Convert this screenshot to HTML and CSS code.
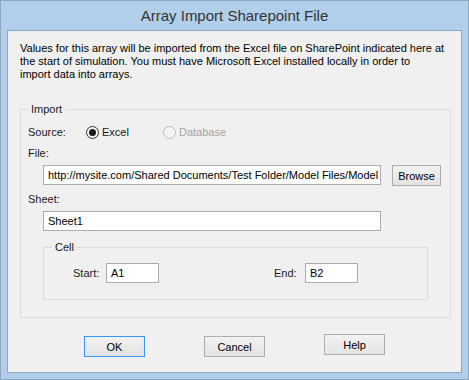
FILE: index.html
```html
<!DOCTYPE html>
<html>
<head>
<meta charset="utf-8">
<title>Array Import Sharepoint File</title>
<link rel="stylesheet" href="styles.css">
</head>
<body>
	<div class="window">
		<div class="titlebar">Array Import Sharepoint File</div>
		<div class="panel">
			<p class="intro">Values for this array will be imported from the Excel file on SharePoint indicated here at<br>the start of simulation. You must have Microsoft Excel installed locally in order to<br>import data into arrays.</p>

			<fieldset class="group import">
				<legend>Import</legend>
				<div class="row source">
					<span class="source-label">Source:</span>
					<span class="radio checked"><span class="dot"></span>Excel</span>
					<span class="radio disabled"><span class="dot"></span>Database</span>
				</div>
				<div class="label file-label">File:</div>
				<div class="row file-row">
					<div class="field wide">http://mysite.com/Shared Documents/Test Folder/Model Files/Model</div>
					<div class="btn browse">Browse</div>
				</div>
				<div class="label sheet-label">Sheet:</div>
				<div class="row sheet-row">
					<div class="field wide">Sheet1</div>
				</div>

				<fieldset class="group cell">
					<legend>Cell</legend>
					<div class="row cell-row">
						<span class="cell-label start-label">Start:</span>
						<div class="field small">A1</div>
						<span class="cell-label end-label">End:</span>
						<div class="field small">B2</div>
					</div>
				</fieldset>
			</fieldset>

			<div class="buttons">
				<div class="btn dialog-btn default">OK</div>
				<div class="btn dialog-btn">Cancel</div>
				<div class="btn dialog-btn help">Help</div>
			</div>
		</div>
	</div>
</body>
</html>
```

FILE: styles.css
```css
html, body {
	margin: 0;
	padding: 0;
	background: #b1cfea;
}

body {
	font-family: "Liberation Sans", Arial, sans-serif;
	font-size: 11px;
	color: #1a1a1a;
	user-select: none;
}

.window {
	width: 469px;
	height: 380px;
	box-sizing: border-box;
	border: 1px solid #8fa8c2;
	background: #b1cfea;
	padding: 0 6px 6px 6px;
	display: flex;
	flex-direction: column;
}

.titlebar {
	height: 29px;
	line-height: 29px;
	text-align: center;
	font-size: 15px;
	color: #333;
}

.panel {
	flex: 1;
	border: 1px solid #8ca7c2;
	background: #f0f0f0;
	padding: 11px 10px 0 12px;
}

.intro {
	margin: 0;
	line-height: 13px;
	color: #000;
}

/* group boxes */
.group {
	margin: 0;
	border: 1px solid #dcdcdc;
	min-width: 0;
	box-sizing: border-box;
}
.group legend {
	padding: 0 3px;
	line-height: 13px;
}

.import {
	margin-top: 22px;
	width: 431px;
	padding: 0 0 17px 7px;
}

.cell {
	margin: 10px 0 0 15px;
	width: 385px;
	padding: 0 0 16px 8px;
}

.row {
	display: flex;
	align-items: center;
}

.label {
	line-height: 16px;
}

.source {
	margin-top: 8px;
	height: 16px;
}
.source-label {
	width: 58px;
}

.radio {
	display: flex;
	align-items: center;
}
.radio.checked {
	width: 77px;
}
.dot {
	width: 13px;
	height: 13px;
	box-sizing: border-box;
	border-radius: 50%;
	border: 1px solid #333;
	background: radial-gradient(circle, #fff 40%, #e8e8e8 100%);
	margin-right: 3px;
	display: flex;
	align-items: center;
	justify-content: center;
}
.checked .dot::after {
	content: "";
	width: 7px;
	height: 7px;
	border-radius: 50%;
	background: #1a1a1a;
}
.disabled {
	color: #a3a3a3;
}
.disabled .dot {
	border-color: #bcbcbc;
	background: #f4f4f4;
}

.file-label {
	margin-top: 5px;
}
.file-row {
	margin-top: 4px;
	align-items: flex-start;
}
.sheet-label {
	margin-top: 5px;
}
.sheet-row {
	margin-top: 4px;
}

.field {
	height: 20px;
	box-sizing: border-box;
	border: 1px solid #abadb3;
	background: #fff;
	padding: 0 4px;
	line-height: 18px;
	white-space: nowrap;
	overflow: hidden;
	color: #000;
}
.field.wide {
	margin-left: 15px;
	width: 338px;
}
.field.small {
	width: 53px;
}

.cell-row {
	margin-top: 9px;
	height: 20px;
}
.start-label {
	margin-left: 21px;
	width: 33px;
}
.end-label {
	margin-left: 115px;
	width: 31px;
}

/* buttons */
.btn {
	height: 21px;
	box-sizing: border-box;
	border: 1px solid #adadad;
	background: linear-gradient(#f2f2f2, #e3e3e3);
	display: flex;
	align-items: center;
	justify-content: center;
	color: #000;
}
.browse {
	width: 49px;
	margin-left: 11px;
}

.buttons {
	display: flex;
	align-items: flex-start;
	gap: 59px;
	margin: 18px 0 0 64px;
}
.dialog-btn {
	width: 61px;
}
.default {
	border-color: #3399ff;
}
.help {
	margin-top: -2px;
}
```
